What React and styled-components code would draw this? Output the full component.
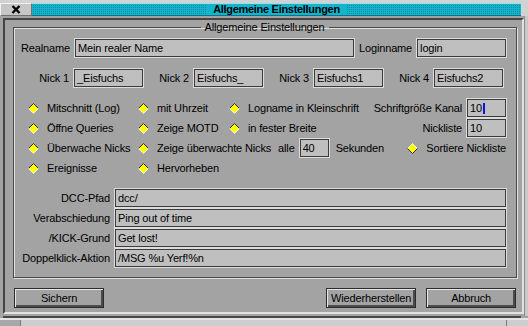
import React from 'react';
import styled, { createGlobalStyle } from 'styled-components';

const GlobalStyle = createGlobalStyle`
  html, body {
    margin: 0;
    padding: 0;
    background: #a3a3a3;
  }
  body {
    font-family: "Liberation Sans", Arial, sans-serif;
    font-size: 11px;
    letter-spacing: -0.15px;
    color: #000;
  }
`;

// #region Window frame

const Window = styled.div`
  width: 528px;
  height: 326px;
  display: flex;
  flex-direction: column;
  background: #d2d2d2;
  padding-top: 3px;
  box-sizing: border-box;
  overflow: hidden;
`;

const TitleRow = styled.div`
  height: 13px;
  display: flex;
  flex: none;
  padding-right: 7px;
`;

const CloseBox = styled.div`
  width: 32px;
  box-sizing: border-box;
  background: #c6c6c6;
  border-top: 1px solid #f2f2f2;
  border-left: 1px solid #f2f2f2;
  border-right: 1px solid #707070;
  border-bottom: 1px solid #707070;
  display: flex;
  align-items: center;
  justify-content: center;
`;

const TitleStrip = styled.div`
  flex: 1;
  display: flex;
  align-items: center;
  justify-content: center;
  background-color: #14b4cc;
  background-image:
    linear-gradient(to right, #14b4cc 1px, transparent 1px),
    linear-gradient(to bottom, #14b4cc 1px, #0a8ea4 1px);
  background-size: 2px 2px;
  border-top: 1px solid #8fe2ee;
  border-bottom: 1px solid #0a7486;
`;

const TitleText = styled.span`
  background: #14b4cc;
  padding: 0 6px;
  font-weight: bold;
  font-size: 11px;
  letter-spacing: -0.3px;
  line-height: 11px;
`;

const Body = styled.div`
  height: 300px;
  flex: none;
  display: flex;
  background: #a3a3a3;
  padding: 2px 0 2px 3px;
  box-sizing: border-box;
`;

const Panel = styled.div`
  flex: 1;
  display: flex;
  flex-direction: column;
  border: 2px solid;
  border-color: #454545 #e2e2e2 #e2e2e2 #454545;
  padding: 1px 5px 4px 8px;
`;

const RightFrame = styled.div`
  width: 7px;
  margin-top: -2px;
  margin-bottom: -2px;
  box-sizing: border-box;
  background: #c9c9c9;
  border-left: 1px solid #8c8c8c;
`;

const BottomFrame = styled.div`
  height: 10px;
  flex: none;
  display: flex;
  flex-direction: column;
  background: #a3a3a3;
`;

const DarkLine = styled.div`
  height: 2px;
  margin: 0 7px 0 3px;
  background: #484848;
`;

const LightLine = styled.div`
  height: 2px;
  background: #e4e4e4;
`;

const ResizeStrip = styled.div`
  flex: 1;
  display: flex;
  background: #cdcdcd;
`;

const Corner = styled.div`
  width: ${p => p.$w}px;
  background: ${p => p.$dark ? '#a8a8a8' : '#cdcdcd'};
  border-right: ${p => p.$right ? 'none' : '1px solid #7a7a7a'};
  border-left: ${p => p.$right ? '1px solid #7a7a7a' : 'none'};
`;

const Spacer = styled.div`
  flex: 1;
`;

// #endregion

// #region Group box and rows

const GroupBox = styled.fieldset`
  margin: 0;
  padding: 4px 10px 9px 9px;
  border: 1px solid #4a4a4a;
  box-shadow: inset 1px 1px 0 #e0e0e0, 1px 1px 0 #e0e0e0;
  min-width: 0;
`;

const Legend = styled.legend`
  margin: 0 auto;
  padding: 0 4px;
  line-height: 13px;
`;

const FieldRow = styled.div`
  display: flex;
  align-items: center;
  gap: 5px;
  height: 20px;
`;

const Label = styled.span`
  display: flex;
  justify-content: flex-end;
  white-space: nowrap;
  width: ${p => p.$w ? `${p.$w}px` : 'auto'};
  flex: ${p => p.$w ? 'none' : '1'};
`;

const Field = styled.div`
  box-sizing: border-box;
  height: 18px;
  width: ${p => p.$w ? `${p.$w}px` : 'auto'};
  flex: none;
  background: #bfbfbf;
  border: 1px solid #3c3c3c;
  box-shadow: 0 0 0 1px #dcdcdc;
  padding: 0 2px;
  line-height: 16px;
  white-space: nowrap;
  overflow: hidden;
  display: flex;
  align-items: center;
`;

const Caret = styled.span`
  display: inline-block;
  width: 2px;
  height: 11px;
  margin-left: 1px;
  background: #1010e8;
`;

const NickGrid = styled.div`
  display: grid;
  grid-template-columns: repeat(4, 120px);
  height: 20px;
  margin-top: 10px;
`;

const NickCell = styled.div`
  display: flex;
  justify-content: flex-end;
  align-items: center;
  gap: 5px;
  white-space: nowrap;
`;

const Options = styled.div`
  display: flex;
  flex-direction: column;
  margin-top: 10px;
  padding-left: 5px;
`;

const OptRow = styled.div`
  display: flex;
  align-items: center;
  height: 20px;
`;

const OptCell = styled.div`
  display: flex;
  align-items: center;
  gap: 8px;
  white-space: nowrap;
  width: ${p => p.$w ? `${p.$w}px` : 'auto'};
  flex: none;
`;

const Interval = styled.div`
  display: flex;
  align-items: center;
  margin-left: 7px;
  white-space: nowrap;
  span:first-child { margin-right: 5px; }
  span:last-child { margin-left: 7px; }
`;

const RightGroup = styled.div`
  margin-left: auto;
  display: flex;
  align-items: center;
  gap: 5px;
  white-space: nowrap;
`;

const Fields = styled.div`
  display: grid;
  grid-template-columns: 87px 1fr;
  grid-auto-rows: 20px;
  column-gap: 5px;
  align-items: center;
  margin-top: 10px;
`;

const ButtonRow = styled.div`
  display: flex;
  gap: 10px;
  margin-top: 10px;
  padding: 0 1px;
`;

const Button = styled.button`
  box-sizing: border-box;
  width: 90px;
  height: 20px;
  padding: 0 0 1px 0;
  font: inherit;
  letter-spacing: inherit;
  color: #000;
  background: #a3a3a3;
  border: 1px solid #2c2c2c;
  box-shadow: inset 1px 1px 0 #e6e6e6, inset -2px -2px 0 #4c4c4c;
`;

// #endregion

function Diamond({ raised }) {
  const top = raised ? '#f2f2f2' : '#2e2e2e';
  const bottom = raised ? '#2e2e2e' : '#f2f2f2';
  return (
    <svg width="11" height="11" viewBox="0 0 11 11" style={{ flex: 'none' }}>
      <polygon points="5.5,0.5 10.5,5.5 5.5,10.5 0.5,5.5" fill="#ffff00" />
      <polyline points="0.5,5.5 5.5,0.5 10.5,5.5" fill="none" stroke={top} strokeWidth="1" />
      <polyline points="0.5,5.5 5.5,10.5 10.5,5.5" fill="none" stroke={bottom} strokeWidth="1" />
    </svg>
  );
}

function Option({ children, w }) {
  return (
    <OptCell $w={w}>
      <Diamond />
      <span>{children}</span>
    </OptCell>
  );
}

const nicks = [
  ['Nick 1', '_Eisfuchs'],
  ['Nick 2', 'Eisfuchs_'],
  ['Nick 3', 'Eisfuchs1'],
  ['Nick 4', 'Eisfuchs2'],
];

const paths = [
  ['DCC-Pfad', 'dcc/'],
  ['Verabschiedung', 'Ping out of time'],
  ['/KICK-Grund', 'Get lost!'],
  ['Doppelklick-Aktion', '/MSG %u Yerf!%n'],
];

export default function App() {
  return (
    <>
      <GlobalStyle />
      <Window>
        <TitleRow>
          <CloseBox>
            <svg width="10" height="9" viewBox="0 0 10 9">
              <path d="M1.5 1 L8.5 8 M8.5 1 L1.5 8" stroke="#000" strokeWidth="2.4" />
            </svg>
          </CloseBox>
          <TitleStrip>
            <TitleText>Allgemeine Einstellungen</TitleText>
          </TitleStrip>
        </TitleRow>
        <Body>
          <Panel>
            <GroupBox>
              <Legend>Allgemeine Einstellungen</Legend>
              <FieldRow>
                <Label $w={47}>Realname</Label>
                <Field $w={279}>Mein realer Name</Field>
                <Label>Loginname</Label>
                <Field $w={89}>login</Field>
              </FieldRow>
              <NickGrid>
                {nicks.map(([label, value]) => (
                  <NickCell key={label}>
                    <span>{label}</span>
                    <Field $w={69}>{value}</Field>
                  </NickCell>
                ))}
              </NickGrid>
              <Options>
                <OptRow>
                  <Option w={110}>Mitschnitt (Log)</Option>
                  <Option w={91}>mit Uhrzeit</Option>
                  <Option>Logname in Kleinschrift</Option>
                  <RightGroup>
                    <span>Schriftgröße Kanal</span>
                    <Field $w={39}>10<Caret /></Field>
                  </RightGroup>
                </OptRow>
                <OptRow>
                  <Option w={110}>Öffne Queries</Option>
                  <Option w={91}>Zeige MOTD</Option>
                  <Option>in fester Breite</Option>
                  <RightGroup>
                    <span>Nickliste</span>
                    <Field $w={39}>10</Field>
                  </RightGroup>
                </OptRow>
                <OptRow>
                  <Option w={110}>Überwache Nicks</Option>
                  <Option>Zeige überwachte Nicks</Option>
                  <Interval>
                    <span>alle</span>
                    <Field $w={29}>40</Field>
                    <span>Sekunden</span>
                  </Interval>
                  <RightGroup>
                    <OptCell>
                      <Diamond raised />
                      <span>Sortiere Nickliste</span>
                    </OptCell>
                  </RightGroup>
                </OptRow>
                <OptRow>
                  <Option w={110}>Ereignisse</Option>
                  <Option w={91}>Hervorheben</Option>
                </OptRow>
              </Options>
              <Fields>
                {paths.map(([label, value]) => (
                  <React.Fragment key={label}>
                    <Label>{label}</Label>
                    <Field>{value}</Field>
                  </React.Fragment>
                ))}
              </Fields>
            </GroupBox>
            <ButtonRow>
              <Button>Sichern</Button>
              <Spacer />
              <Button>Wiederherstellen</Button>
              <Button>Abbruch</Button>
            </ButtonRow>
          </Panel>
          <RightFrame />
        </Body>
        <BottomFrame>
          <DarkLine />
          <LightLine />
          <ResizeStrip>
            <Corner $w={20} $dark />
            <Spacer />
            <Corner $w={21} $right />
          </ResizeStrip>
        </BottomFrame>
      </Window>
    </>
  );
}
